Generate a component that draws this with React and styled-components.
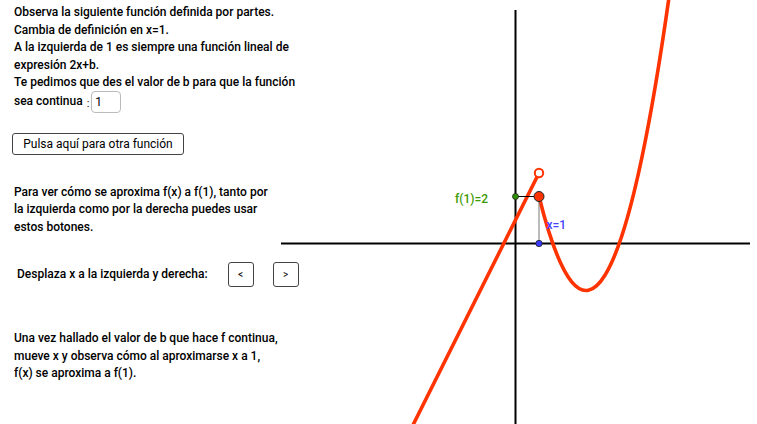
import styled, { createGlobalStyle } from 'styled-components'

const GlobalStyle = createGlobalStyle`
    html, body {
        margin: 0;
        padding: 0;
        background: #fff;
    }
    body {
        font-family: Roboto, "Liberation Sans", sans-serif;
        color: #000;
    }
`

// graph view: origin and scale in svg pixels
const O = { x: 234.5, y: 243.5 }
const S = 23.5
const px = (x) => O.x + x * S
const py = (y) => O.y - y * S

const RED = '#ff3300'

const Graph = () => {
    const b = 1
    const lineStart = { x: -4.4, y: 2 * -4.4 + b }
    // parabola (x-3)^2 - 2 from x=1 to x=6.6 as a quadratic bezier
    const x0 = 1, x1 = 6.6
    const f = (x) => (x - 3) ** 2 - 2
    const cx = (x0 + x1) / 2
    const cy = f(x0) + 2 * (x0 - 3) * (cx - x0)

    return (
        <StyledSvg width="476" height="424" viewBox="0 0 476 424">
            <line x1="0" y1={O.y} x2="469" y2={O.y} stroke="#000" strokeWidth="2" />
            <line x1={O.x} y1="10" x2={O.x} y2="424" stroke="#000" strokeWidth="2" />

            <line
                x1={px(lineStart.x)} y1={py(lineStart.y)}
                x2={px(1)} y2={py(2 + b)}
                stroke={RED} strokeWidth="3.6"
            />
            <path
                d={`M ${px(x0)} ${py(f(x0))} Q ${px(cx)} ${py(cy)} ${px(x1)} ${py(f(x1))}`}
                fill="none" stroke={RED} strokeWidth="3.6"
            />

            <line x1={O.x} y1={py(2)} x2={px(1)} y2={py(2)} stroke="#000" strokeWidth="1" />
            <line x1={px(1)} y1={py(2)} x2={px(1)} y2={O.y} stroke="#777" strokeWidth="1" />

            <circle cx={px(1)} cy={py(2 + b)} r="4.2" fill="#fff" stroke={RED} strokeWidth="2" />
            <circle cx={px(1)} cy={py(2)} r="5" fill={RED} stroke="#222" strokeWidth="1" />
            <circle cx={O.x} cy={py(2)} r="3" fill="#2f8f00" stroke="#222" strokeWidth="0.8" />
            <circle cx={px(1)} cy={O.y} r="3.2" fill="#3a3aff" stroke="#222" strokeWidth="0.8" />

            <text x="174" y="203" className="label label--green">f(1)=2</text>
            <text x="265.5" y="229" className="label label--blue">x=1</text>
        </StyledSvg>
    )
}

const App = () => {
    return (
        <>
            <GlobalStyle />
            <StyledApp>
                <Side>
                    <Text>
                        Observa la siguiente función definida por partes.<br />
                        Cambia de definición en x=1.<br />
                        A la izquierda de 1 es siempre una función lineal de<br />
                        expresión 2x+b.<br />
                        Te pedimos que des el valor de b para que la función
                    </Text>
                    <InputRow>
                        <Text as="span">sea continua</Text>
                        <Colon>:</Colon>
                        <ValueBox>1</ValueBox>
                    </InputRow>

                    <Button $wide>Pulsa aquí para otra función</Button>

                    <Text $top={29}>
                        Para ver cómo se aproxima f(x) a f(1), tanto por<br />
                        la izquierda como por la derecha puedes usar<br />
                        estos botones.
                    </Text>

                    <Controls>
                        <Text as="span">Desplaza x a la izquierda y derecha:</Text>
                        <Button $small>&lt;</Button>
                        <Button $small>&gt;</Button>
                    </Controls>

                    <Text $top={43}>
                        Una vez hallado el valor de b que hace f continua,<br />
                        mueve x y observa cómo al aproximarse x a 1,<br />
                        f(x) se aproxima a f(1).
                    </Text>
                </Side>
                <Graph />
            </StyledApp>
        </>
    )
}

const StyledApp = styled.div`
    display: flex;
    width: 757px;
    height: 424px;
    overflow: hidden;
`

const Side = styled.div`
    width: 281px;
    flex-shrink: 0;
    display: flex;
    flex-direction: column;
    align-items: flex-start;
    padding: 4px 0 0 14px;
    box-sizing: border-box;
`

const Text = styled.p`
    margin: ${({$top}) => $top || 0}px 0 0;
    font-size: 12px;
    font-weight: 500;
    line-height: 17.5px;
    white-space: nowrap;
`

const InputRow = styled.div`
    display: flex;
    align-items: center;
    height: 22px;
    margin-top: -1px;
`

const Colon = styled.span`
    font-size: 11px;
    margin: 4px 1px 0 4px;
`

const ValueBox = styled.div`
    width: 30px;
    height: 22px;
    box-sizing: border-box;
    border: 1px solid #bbb;
    border-radius: 4px;
    font-size: 12px;
    line-height: 20px;
    padding-left: 3px;
    margin-left: 1px;
`

const Button = styled.div`
    display: flex;
    align-items: center;
    justify-content: center;
    border: 1px solid #444;
    border-radius: 3px;
    background: #fff;
    font-size: ${({$small}) => $small ? '10px' : '12px'};
    box-sizing: border-box;
    height: ${({$small}) => $small ? '25px' : '22px'};
    width: ${({$small}) => $small ? '26px' : '172px'};
    margin: ${({$wide}) => $wide ? '20px 0 0 -2px' : '0'};
`

const Controls = styled.div`
    display: flex;
    align-items: center;
    margin: 26px 0 0 3px;
    gap: 19px;

    span {
        margin-right: 1px;
    }
`

const StyledSvg = styled.svg`
    display: block;
    flex-shrink: 0;

    .label {
        font-family: Roboto, "Liberation Sans", sans-serif;
        font-size: 12px;
        font-weight: 500;
    }
    .label--green {
        fill: #3c9a00;
    }
    .label--blue {
        fill: #4444ff;
    }
`

export default App
